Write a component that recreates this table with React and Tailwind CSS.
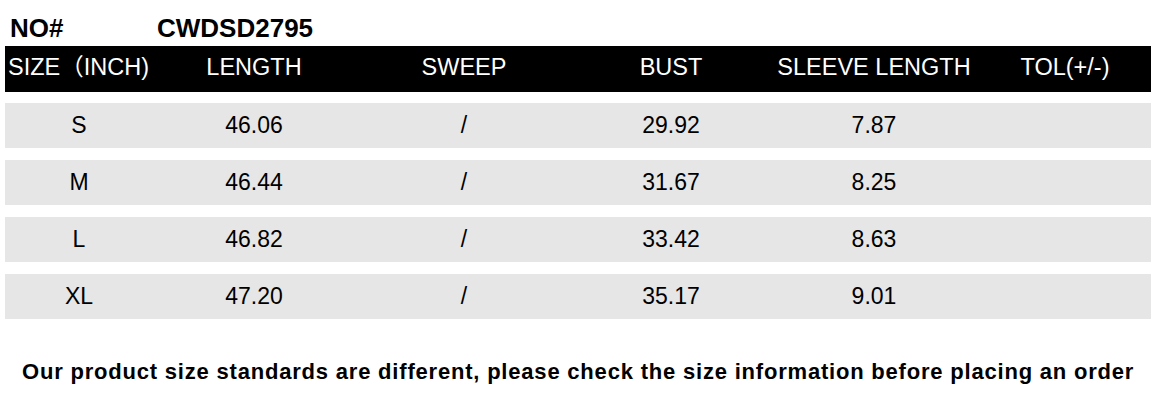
import React from 'react';

const columns = ['SIZE（INCH)', 'LENGTH', 'SWEEP', 'BUST', 'SLEEVE LENGTH', 'TOL(+/-)'];

const rows = [
  ['S', '46.06', '/', '29.92', '7.87', ''],
  ['M', '46.44', '/', '31.67', '8.25', ''],
  ['L', '46.82', '/', '33.42', '8.63', ''],
  ['XL', '47.20', '/', '35.17', '9.01', ''],
];

const gridCols = 'grid grid-cols-[148px_202px_218px_196px_210px_172px]';

const App = () => {
  return (
    <div className="w-[1158px] h-[402px] bg-white text-black overflow-hidden" style={{ fontFamily: '"Liberation Sans", Arial, "Noto Sans CJK SC", sans-serif' }}>
      {/* Title */}
      <div className="h-[46px] flex items-end pb-[5px] text-[26px] font-bold leading-none">
        <span className="pl-[10px] w-[157px]">NO#</span>
        <span>CWDSD2795</span>
      </div>

      {/* Table */}
      <div className="ml-[5px] w-[1146px]">
        <div className={`${gridCols} h-[46px] bg-black text-white text-[23.5px] items-center pb-[3px]`}>
          {columns.map((c, i) => (
            <div key={i} className={`text-center whitespace-nowrap ${i === 0 ? 'text-left pl-[3px]' : ''}`}>{c}</div>
          ))}
        </div>

        <div className="mt-[11px] flex flex-col gap-[12px]">
          {rows.map((r, i) => (
            <div key={i} className={`${gridCols} h-[45px] bg-[#e6e6e6] text-[23px] items-center`}>
              {r.map((v, j) => (
                <div key={j} className="text-center">{v}</div>
              ))}
            </div>
          ))}
        </div>
      </div>

      {/* Note */}
      <div className="mt-[42px] pl-[22px] text-[22px] tracking-[0.8px] font-bold leading-none whitespace-nowrap">
        Our product size standards are different, please check the size information before placing an order
      </div>
    </div>
  );
};

export default App;
